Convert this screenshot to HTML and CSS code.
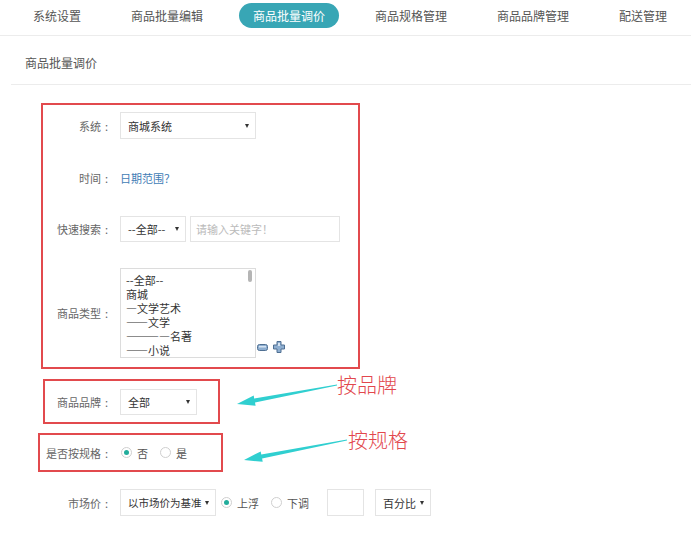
FILE: index.html
```html
<!DOCTYPE html>
<html lang="zh-CN">
<head>
    <meta charset="UTF-8">
    <title>商品批量调价</title>
    <link rel="stylesheet" href="styles.css">
</head>
<body>
    <nav class="tabs">
        <a class="tab">系统设置</a>
        <a class="tab">商品批量编辑</a>
        <a class="tab active">商品批量调价</a>
        <a class="tab">商品规格管理</a>
        <a class="tab">商品品牌管理</a>
        <a class="tab">配送管理</a>
    </nav>

    <div class="page-title">商品批量调价</div>

    <div class="form">
        <div class="mark mark-main">
            <div class="row">
                <span class="label">系统<i>:</i></span>
                <div class="select sel-system">商城系统</div>
            </div>
            <div class="row row-time">
                <span class="label">时间<i>:</i></span>
                <a class="link">日期范围？</a>
            </div>
            <div class="row row-search">
                <span class="label">快速搜索<i>:</i></span>
                <div class="select sel-all">--全部--</div>
                <div class="input keyword">请输入关键字！</div>
            </div>
            <div class="row row-type">
                <span class="label">商品类型<i>:</i></span>
                <div class="listbox">
                    <ul class="options">
                        <li>--全部--</li>
                        <li>商城</li>
                        <li>—文学艺术</li>
                        <li>——文学</li>
                        <li>————名著</li>
                        <li>——小说</li>
                    </ul>
                    <div class="scroll"><div class="thumb"></div></div>
                </div>
                <div class="tools">
                    <svg width="11" height="7" viewBox="0 0 11 7">
                        <rect x="0.5" y="0.5" width="10" height="6" rx="2" fill="#8eaed0" stroke="#4f6f92"/>
                        <rect x="2" y="2" width="7" height="1.5" fill="#d6e4f2"/>
                    </svg>
                    <svg width="12" height="12" viewBox="0 0 12 12">
                        <path d="M4 0.5h4v3.5h3.5v4h-3.5v3.5h-4v-3.5h-3.5v-4h3.5z" fill="#8eaed0" stroke="#4f6f92" stroke-linejoin="round"/>
                        <rect x="5" y="2" width="2" height="3" fill="#d6e4f2"/>
                    </svg>
                </div>
            </div>
        </div>

        <div class="mark mark-brand">
            <div class="row">
                <span class="label">商品品牌<i>:</i></span>
                <div class="select sel-brand">全部</div>
            </div>
        </div>

        <div class="mark mark-spec">
            <div class="row">
                <span class="label">是否按规格<i>:</i></span>
                <span class="radio checked"></span><span class="opt">否</span>
                <span class="radio"></span><span class="opt">是</span>
            </div>
        </div>

        <div class="row row-price">
            <span class="label">市场价<i>:</i></span>
            <div class="select sel-base">以市场价为基准</div>
            <span class="radio checked"></span><span class="opt">上浮</span>
            <span class="radio"></span><span class="opt">下调</span>
            <div class="input amount"></div>
            <div class="select sel-unit">百分比</div>
        </div>
    </div>

    <div class="notes">
        <svg class="arrows" width="691" height="535" viewBox="0 0 691 535">
            <polygon points="337,384.4 254.2,398.6 253.7,395.4 237,404 255.6,405.8 255,402.6 337,385.6" fill="#30cfd0"/>
            <polygon points="347,439.4 261.3,454.6 260.7,451.4 244,460 262.7,461.8 262.1,458.6 347,440.6" fill="#30cfd0"/>
        </svg>
        <span class="note note-brand">按品牌</span>
        <span class="note note-spec">按规格</span>
    </div>
</body>
</html>
```

FILE: styles.css
```css
body {
    margin: 0;
    font-family: "Noto Sans CJK SC", sans-serif;
    background: #fff;
    color: #666;
    position: relative;
    width: 691px;
    height: 535px;
    overflow: hidden;
}

.tabs {
    display: flex;
    gap: 22px;
    height: 36px;
    padding: 3px 0 0 19px;
    box-sizing: border-box;
    border-bottom: 1px solid #ececec;
}

.tab {
    height: 25px;
    line-height: 25px;
    padding: 0 14px;
    border-radius: 13px;
    font-size: 12px;
    color: #555;
    white-space: nowrap;
}

.tab.active {
    background: #38a6b5;
    color: #fff;
}

.page-title {
    margin-left: 11px;
    height: 49px;
    padding: 19px 0 0 14px;
    box-sizing: border-box;
    line-height: 16px;
    font-size: 12px;
    color: #555;
    border-bottom: 1px solid #ececec;
}

.form {
    padding-top: 18px;
}

.mark {
    border: 2px solid #e24a4d;
    box-sizing: border-box;
}

.mark-main {
    --lw: 69px;
    margin-left: 41px;
    width: 319px;
    padding: 7px 0 9px;
}

.mark-brand {
    --lw: 67px;
    margin-top: 10px;
    margin-left: 43px;
    width: 177px;
    height: 45px;
    display: flex;
    align-items: center;
}

.mark-spec {
    --lw: 72px;
    margin-top: 9px;
    margin-left: 38px;
    width: 185px;
    height: 39px;
    display: flex;
    align-items: center;
}

.row {
    display: flex;
    align-items: center;
    height: 27px;
    font-size: 11px;
}

.label {
    width: var(--lw);
    margin-right: 8px;
    text-align: right;
    color: #666;
    white-space: nowrap;
}

.label i {
    display: inline-block;
    width: 11px;
    font-style: normal;
    text-align: center;
}

.row-time {
    margin-top: 25px;
}

.row-search {
    margin-top: 25px;
    height: 26px;
}

.row-type {
    margin-top: 26px;
    height: 90px;
}

.row-price {
    --lw: 112px;
    margin-top: 17px;
}

.link {
    color: #3f7db5;
}

.select {
    display: flex;
    align-items: center;
    justify-content: space-between;
    height: 100%;
    padding: 0 6px 0 7px;
    box-sizing: border-box;
    border: 1px solid #e4e4e4;
    color: #333;
    white-space: nowrap;
}

.select::after {
    content: "";
    border-top: 4px solid #333;
    border-left: 2.5px solid transparent;
    border-right: 2.5px solid transparent;
}

.sel-system {
    width: 136px;
}

.sel-all {
    width: 66px;
}

.sel-brand {
    width: 77px;
    height: 26px;
}

.sel-base {
    width: 96px;
    font-size: 10.5px;
}

.sel-unit {
    width: 56px;
    margin-left: 11px;
}

.input {
    height: 100%;
    box-sizing: border-box;
    border: 1px solid #e4e4e4;
}

.keyword {
    width: 150px;
    margin-left: 4px;
    padding-left: 5px;
    line-height: 24px;
    color: #bbb;
}

.amount {
    width: 37px;
    margin-left: 18px;
}

.listbox {
    display: flex;
    width: 136px;
    height: 90px;
    box-sizing: border-box;
    border: 1px solid #dcdcdc;
}

.options {
    flex: 1;
    list-style: none;
    margin: 0;
    padding: 4px 0 0 5px;
    line-height: 14px;
    color: #333;
    white-space: nowrap;
    overflow: hidden;
}

.options li {
    height: 14px;
}

.scroll {
    width: 5px;
    padding: 0 2px 0 0;
}

.thumb {
    width: 4px;
    height: 12px;
    margin-top: 1px;
    border-radius: 2px;
    background: #b5b5b5;
}

.tools {
    align-self: flex-end;
    display: flex;
    align-items: center;
    gap: 5px;
    margin: 0 0 5px 1px;
}

.tools svg {
    display: block;
}

.radio {
    width: 11px;
    height: 11px;
    box-sizing: border-box;
    border: 1px solid #cfcfcf;
    border-radius: 50%;
    display: flex;
    align-items: center;
    justify-content: center;
}

.radio.checked::after {
    content: "";
    width: 5px;
    height: 5px;
    border-radius: 50%;
    background: #22ad9c;
}

.opt {
    margin: 0 11px 0 5px;
    color: #555;
}

.mark-spec .radio {
    margin-left: 1px;
}

.row-price .select + .radio {
    margin-left: 5px;
}

.row-price .opt {
    margin-right: 12px;
}

.row-price .opt + .radio + .opt {
    margin-right: 0;
}

.notes {
    position: absolute;
    left: 0;
    top: 0;
    width: 691px;
    height: 535px;
    pointer-events: none;
}

.arrows {
    position: absolute;
    left: 0;
    top: 0;
}

.note {
    position: absolute;
    font-size: 20px;
    font-weight: 300;
    line-height: 24px;
    color: #e2474d;
}

.note-brand {
    left: 337px;
    top: 373px;
}

.note-spec {
    left: 348px;
    top: 428px;
}
```
